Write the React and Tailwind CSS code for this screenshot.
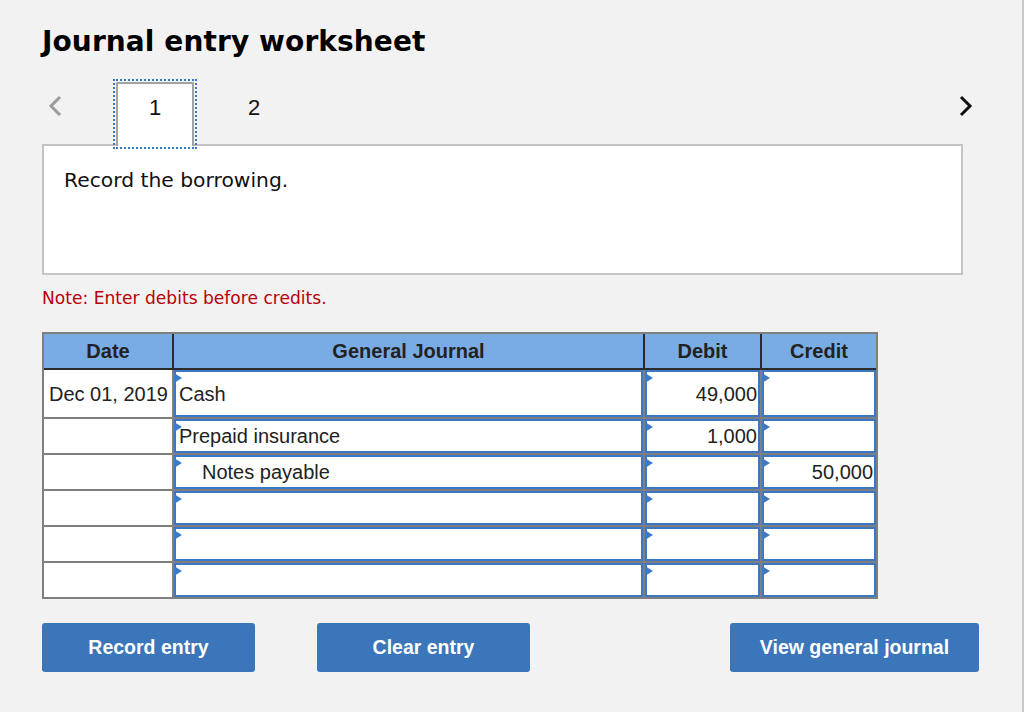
import React from "react";

const rows = [
  { date: "Dec 01, 2019", account: "Cash", indent: false, debit: "49,000", credit: "", tall: true },
  { date: "", account: "Prepaid insurance", indent: false, debit: "1,000", credit: "" },
  { date: "", account: "Notes payable", indent: true, debit: "", credit: "50,000" },
  { date: "", account: "", debit: "", credit: "" },
  { date: "", account: "", debit: "", credit: "" },
  { date: "", account: "", debit: "", credit: "" },
];

function Field({ children, align = "left", indent = false }) {
  return (
    <div
      className={
        "relative h-full bg-white border-2 border-[#3b78c1] flex items-center " +
        (align === "right" ? "justify-end pr-[1px]" : indent ? "pl-[26px]" : "pl-[3px]")
      }
    >
      <span className="absolute left-[-2px] top-[1px] w-0 h-0 border-y-[5px] border-y-transparent border-l-[8px] border-l-[#3b7bc8]" />
      <span className="text-[20px] leading-none text-[#222]">{children}</span>
    </div>
  );
}

export default function App() {
  return (
    <div className="w-[1024px] h-[712px] bg-[#f2f2f2] border-r-2 border-[#c8c8c8] pl-[42px] pt-[28px] overflow-hidden font-['Liberation_Sans',Arial,sans-serif]">
      <h1 className="text-[28px] leading-[28px] font-bold font-['DejaVu_Sans',Verdana,sans-serif] text-black tracking-[0.1px]">
        Journal entry worksheet
      </h1>

      <div className="mt-[26px] flex items-start h-[64px] w-[931px]">
        <svg className="mt-[13px] ml-[6px]" width="14" height="22" viewBox="0 0 14 22">
          <polyline points="12,2 3,11 12,20" fill="none" stroke="#9b9b9b" strokeWidth="3" />
        </svg>
        <div className="relative z-10 ml-[54px] w-[78px] h-[64px] bg-white border-2 border-b-0 border-[#a3a3a3] outline-2 outline-dotted outline-[#3b78c4] outline-offset-[1px] flex justify-center pt-[11px]">
          <span className="text-[22px] leading-[26px] text-[#111]">1</span>
        </div>
        <div className="ml-[21px] w-[78px] flex justify-center pt-[13px]">
          <span className="text-[22px] leading-[26px] text-[#111]">2</span>
        </div>
        <div className="flex-1" />
        <svg className="mt-[13px]" width="14" height="22" viewBox="0 0 14 22">
          <polyline points="2,2 11,11 2,20" fill="none" stroke="#111" strokeWidth="3" />
        </svg>
      </div>

      <div className="-mt-[2px] w-[921px] h-[131px] border-2 border-[#c4c4c4] bg-white pl-[20px] pt-[23px]">
        <p className="text-[20.3px] leading-[23px] font-['DejaVu_Sans',Verdana,sans-serif] text-[#111]">
          Record the borrowing.
        </p>
      </div>

      <p className="mt-[13px] text-[17.1px] leading-[20px] font-['DejaVu_Sans',Verdana,sans-serif] text-[#b8000b]">
        Note: Enter debits before credits.
      </p>

      <div className="mt-[24px] w-[836px] border-2 border-[#7f7f7f] bg-[#7f7f7f]">
        <div className="grid grid-cols-[128px_469px_115px_114px] gap-x-[2px] bg-[#2b2b2b] border-b-2 border-[#2b2b2b]">
          {["Date", "General Journal", "Debit", "Credit"].map((h) => (
            <div key={h} className="h-[34px] bg-[#79ace4] flex items-center justify-center">
              <span className="text-[20px] leading-none font-bold text-[#222]">{h}</span>
            </div>
          ))}
        </div>
        <div className="flex flex-col gap-y-[2px]">
          {rows.map((r, i) => (
            <div
              key={i}
              className={
                "grid grid-cols-[128px_469px_115px_114px] gap-x-[2px] " +
                (r.tall ? "h-[47px]" : "h-[34px]")
              }
            >
              <div className="bg-white flex items-center pl-[5px]">
                <span className="text-[20px] leading-none text-[#222] whitespace-nowrap">{r.date}</span>
              </div>
              <Field indent={r.indent}>{r.account}</Field>
              <Field align="right">{r.debit}</Field>
              <Field align="right">{r.credit}</Field>
            </div>
          ))}
        </div>
      </div>

      <div className="mt-[24px] flex w-[937px]">
        <button className="w-[213px] h-[49px] rounded-[3px] bg-[#3a76b9] text-white text-[19.5px] font-bold">
          Record entry
        </button>
        <button className="ml-[62px] w-[213px] h-[49px] rounded-[3px] bg-[#3a76b9] text-white text-[19.5px] font-bold">
          Clear entry
        </button>
        <div className="flex-1" />
        <button className="w-[249px] h-[49px] rounded-[3px] bg-[#3a76b9] text-white text-[19.5px] font-bold">
          View general journal
        </button>
      </div>
    </div>
  );
}
